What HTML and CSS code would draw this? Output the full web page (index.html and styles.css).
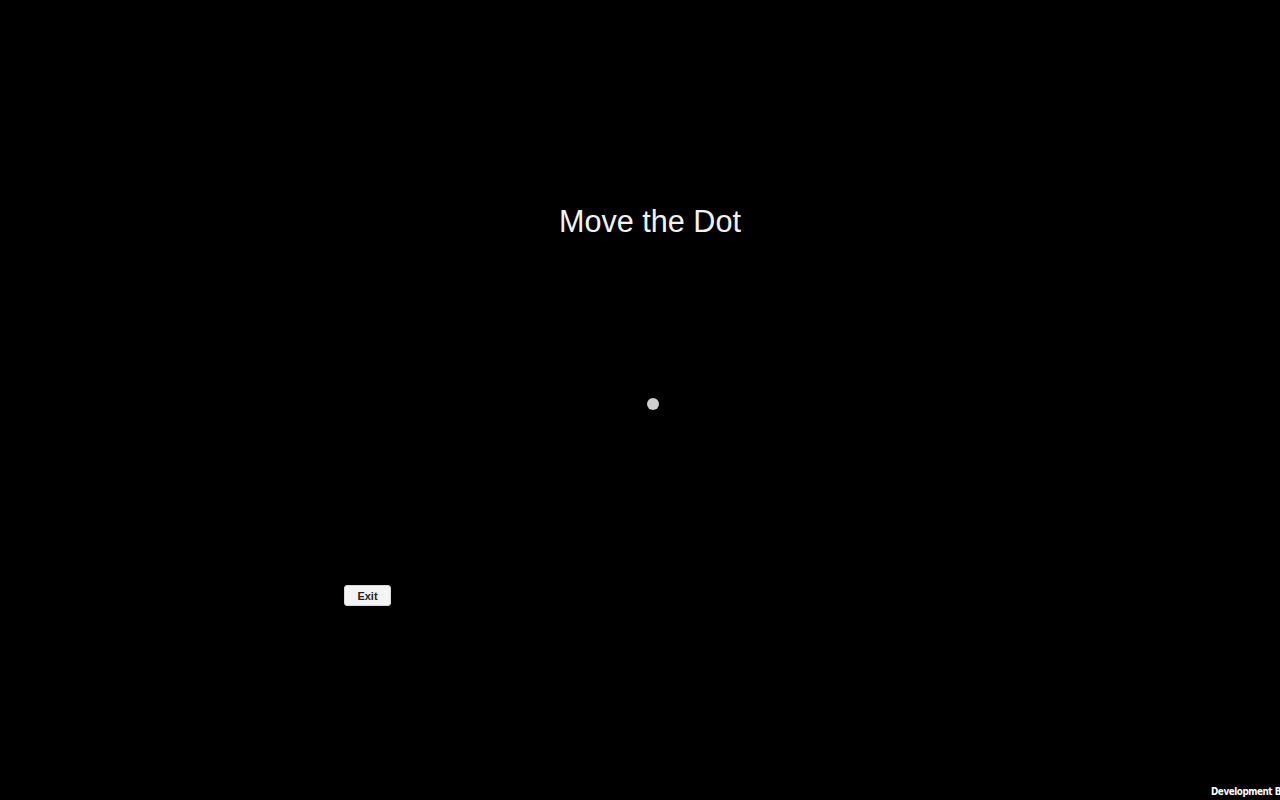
FILE: index.html
```html
<!DOCTYPE html>
<html>
<head>
<meta charset="utf-8">
<title>Move the Dot</title>
<link rel="stylesheet" href="styles.css">
</head>
<body>
<div class="stage">
  <h1 class="title">Move the Dot</h1>
  <div class="dot"></div>
  <button class="exit">Exit</button>
  <div class="build">Development Build</div>
</div>
</body>
</html>
```
FILE: styles.css
```css
html, body {
  margin: 0;
  padding: 0;
  background: #000;
  width: 100%;
  height: 100%;
  overflow: hidden;
}
.stage {
  position: relative;
  width: 1280px;
  height: 800px;
  overflow: hidden;
  background: #000;
  font-family: "Liberation Sans", Arial, sans-serif;
}
.title {
  position: absolute;
  left: 0;
  width: 1300px;
  top: 203px;
  margin: 0;
  text-align: center;
  font-weight: normal;
  font-size: 30.6px;
  line-height: 36px;
  color: #f2f2f2;
}
.dot {
  position: absolute;
  left: 647px;
  top: 398px;
  width: 12px;
  height: 12px;
  border-radius: 50%;
  background: #cfcfcf;
}
.exit {
  position: absolute;
  left: 344px;
  top: 585px;
  width: 47px;
  height: 21px;
  padding: 0;
  border: 1px solid #d8d8d8;
  border-radius: 3px;
  background: #f4f4f4;
  color: #222;
  font-family: "Liberation Sans", Arial, sans-serif;
  font-weight: bold;
  font-size: 11px;
}
.build {
  position: absolute;
  left: 1211px;
  top: 785px;
  white-space: nowrap;
  font-family: "DejaVu Sans Condensed", "DejaVu Sans", sans-serif;
  font-weight: bold;
  font-size: 9.8px;
  letter-spacing: -0.45px;
  line-height: 13px;
  color: #fff;
}
```
